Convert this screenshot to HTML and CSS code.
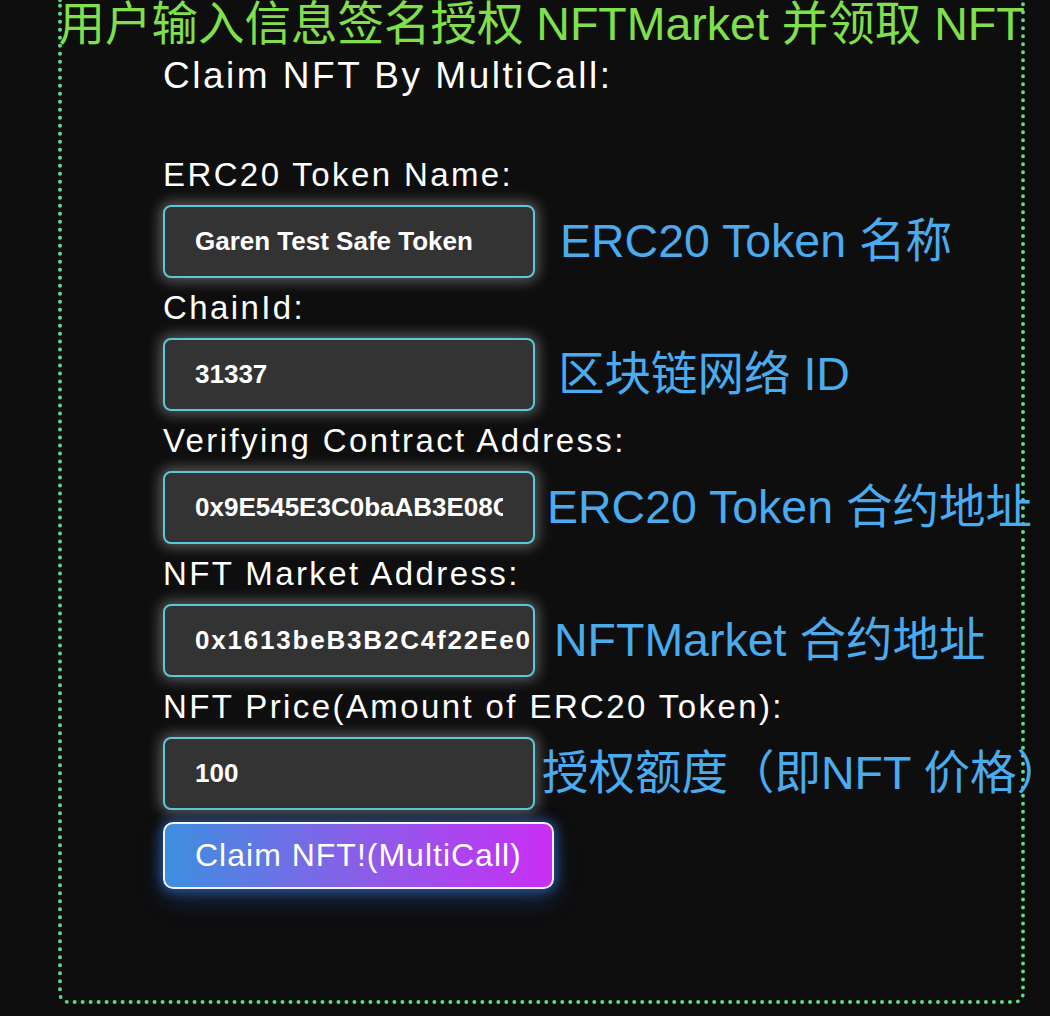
FILE: index.html
```html
<!DOCTYPE html>
<html lang="zh-CN">
<head>
<meta charset="utf-8">
<title>Claim NFT By MultiCall</title>
<link rel="stylesheet" href="styles.css">
</head>
<body>
<div class="frame">
  <div class="title-wrap">
    <h1 class="title">用户输入信息签名授权 NFTMarket 并领取 NFT</h1>
  </div>
  <form class="form">
    <h2 class="heading">Claim NFT By MultiCall:</h2>

    <label class="label" for="token-name">ERC20 Token Name:</label>
    <div class="row">
      <input class="field" id="token-name" type="text" value="Garen Test Safe Token">
      <span class="note note-1">ERC20 Token 名称</span>
    </div>

    <label class="label" for="chain-id">ChainId:</label>
    <div class="row">
      <input class="field" id="chain-id" type="text" value="31337">
      <span class="note note-2">区块链网络 ID</span>
    </div>

    <label class="label" for="verifying">Verifying Contract Address:</label>
    <div class="row">
      <input class="field" id="verifying" type="text" value="0x9E545E3C0baAB3E08CdfD552C960A1050f373042">
      <span class="note note-3">ERC20 Token 合约地址</span>
    </div>

    <label class="label" for="market">NFT Market Address:</label>
    <div class="row">
      <input class="field field-wide" id="market" type="text" value="0x1613beB3B2C4f22Ee086B2b38C1476A3cE7f78E8">
      <span class="note note-4">NFTMarket 合约地址</span>
    </div>

    <label class="label" for="price">NFT Price(Amount of ERC20 Token):</label>
    <div class="row">
      <input class="field" id="price" type="text" value="100">
      <span class="note note-5">授权额度（即NFT 价格）</span>
    </div>

    <button class="claim" type="button">Claim NFT!(MultiCall)</button>
  </form>
</div>
</body>
</html>
```

FILE: styles.css
```css
html,
body {
  margin: 0;
  height: 100%;
  background: #0e0e0e;
  overflow: hidden;
}

body {
  font-family: "Liberation Sans", "Noto Sans CJK SC", sans-serif;
  color: #ffffff;
}

.frame {
  margin-left: 58px;
  width: 967px;
  box-sizing: border-box;
  border: 4px dotted #5cdb86;
  border-top: 0;
  border-radius: 0 0 10px 10px;
  padding-bottom: 111px;
}

.title-wrap {
  display: flex;
  justify-content: center;
  height: 48px;
  margin: 0 -12px;
}

.title {
  flex-shrink: 0;
  margin: 0;
  font-size: 46.5px;
  font-weight: normal;
  line-height: 48px;
  white-space: nowrap;
  color: #80e04c;
}

.form {
  display: flex;
  flex-direction: column;
  align-items: flex-start;
  padding-left: 101px;
}

.heading {
  margin: 0 0 41px;
  font-size: 37px;
  font-weight: normal;
  line-height: 56px;
  letter-spacing: 2.5px;
}

.label {
  font-size: 33px;
  line-height: 60px;
  letter-spacing: 2.4px;
  white-space: nowrap;
}

.row {
  display: flex;
  align-items: center;
}

.field {
  box-sizing: border-box;
  width: 372px;
  height: 73px;
  margin: 0;
  padding: 0 30px;
  background: #333333;
  border: 2px solid #5ac8d8;
  border-radius: 8px;
  color: #ffffff;
  font: bold 26px "Liberation Sans", sans-serif;
  box-shadow: 0 0 14px 3px rgba(255, 255, 255, 0.33);
  outline: none;
}

.field-wide {
  padding-right: 2px;
  letter-spacing: 1.8px;
}

.note {
  flex-shrink: 0;
  white-space: nowrap;
  font-size: 46.5px;
  line-height: 47px;
  color: #4aabef;
}

.note-1 { margin-left: 25px; }
.note-2 { margin-left: 23px; }
.note-3 { margin-left: 12px; }
.note-4 { margin-left: 19px; }
.note-5 { margin-left: 7px; }

.claim {
  margin-top: 12px;
  height: 67px;
  box-sizing: border-box;
  padding: 0 30px;
  border: 2px solid #f2f2f2;
  border-radius: 10px;
  background: linear-gradient(90deg, #3d8fe0 0%, #8a5ee8 50%, #c92ef4 100%);
  color: #ffffff;
  font: 32px "Liberation Sans", sans-serif;
  letter-spacing: 1px;
  box-shadow: 0 0 12px 2px rgba(59, 130, 246, 0.55), 0 10px 24px rgba(40, 100, 200, 0.35);
  cursor: pointer;
}
```
